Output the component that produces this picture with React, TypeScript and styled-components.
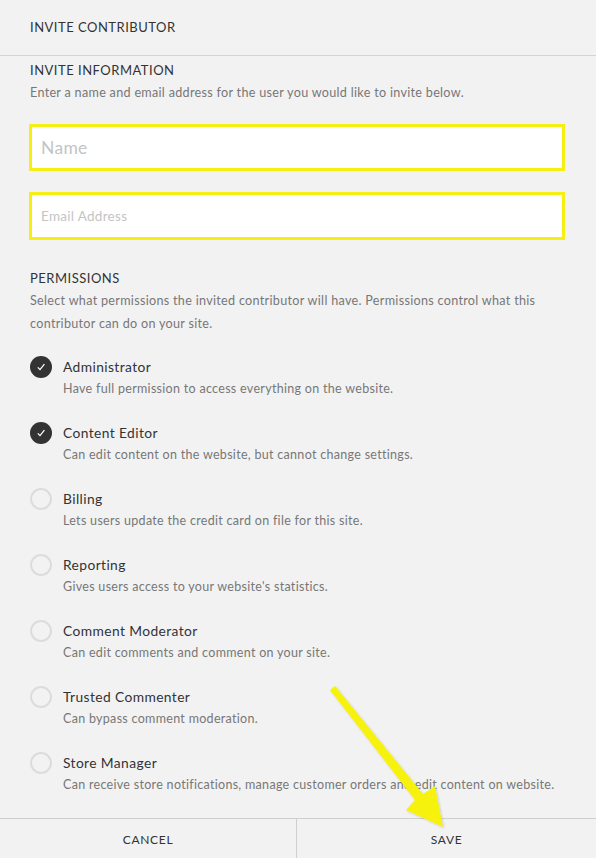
import { FunctionComponent } from 'react'
import styled, { createGlobalStyle } from 'styled-components'

const GlobalStyle = createGlobalStyle`
  html, body {
    margin: 0;
    padding: 0;
    background: #f2f2f2;
  }
  body {
    font-family: Lato, 'Open Sans', sans-serif;
    color: #333;
  }
  * {
    box-sizing: border-box;
  }
`

interface IPermission {
  title: string
  text: string
  checked?: boolean
}

const permissions: IPermission[] = [
  { title: 'Administrator', text: 'Have full permission to access everything on the website.', checked: true },
  { title: 'Content Editor', text: 'Can edit content on the website, but cannot change settings.', checked: true },
  { title: 'Billing', text: 'Lets users update the credit card on file for this site.' },
  { title: 'Reporting', text: "Gives users access to your website's statistics." },
  { title: 'Comment Moderator', text: 'Can edit comments and comment on your site.' },
  { title: 'Trusted Commenter', text: 'Can bypass comment moderation.' },
  { title: 'Store Manager', text: 'Can receive store notifications, manage customer orders and edit content on website.' }
]

const App: FunctionComponent = () => {
  return (
    <Page>
      <GlobalStyle />
      <Header>Invite Contributor</Header>
      <Body>
        <SectionTitle>Invite Information</SectionTitle>
        <Help>Enter a name and email address for the user you would like to invite below.</Help>
        <Field $large placeholder='Name' />
        <Field placeholder='Email Address' />

        <SectionTitle $gap={30}>Permissions</SectionTitle>
        <Help>
          Select what permissions the invited contributor will have. Permissions control what this
          contributor can do on your site.
        </Help>
        <List>
          {permissions.map(item => (
            <Permission key={item.title}>
              <Radio $checked={item.checked}>
                {item.checked && (
                  <svg width='10' height='10' viewBox='0 0 10 10'>
                    <path d='M1.8 5.4 L4 7.6 L8.4 2.2' fill='none' stroke='#fff' strokeWidth='1.3' />
                  </svg>
                )}
              </Radio>
              <div>
                <PermissionTitle>{item.title}</PermissionTitle>
                <PermissionText>{item.text}</PermissionText>
              </div>
            </Permission>
          ))}
        </List>
      </Body>
      <Footer>
        <FooterButton>Cancel</FooterButton>
        <FooterButton>Save</FooterButton>
      </Footer>
      <Arrow width='596' height='858' viewBox='0 0 596 858'>
        <defs>
          <filter id='arrowShadow' x='-20%' y='-20%' width='140%' height='140%'>
            <feDropShadow dx='1' dy='1' stdDeviation='1.2' floodColor='#000' floodOpacity='0.18' />
          </filter>
        </defs>
        <path
          d='M330 690 L335 686 L423 794 L435 786 L443 827 L406 810 L415 800 Z'
          fill='#f7f20f'
          filter='url(#arrowShadow)'
        />
      </Arrow>
    </Page>
  )
}

const Page = styled.div`
  position: relative;
  width: 596px;
  height: 858px;
  display: flex;
  flex-direction: column;
  overflow: hidden;
`

const Header = styled.div`
  height: 56px;
  flex: 0 0 56px;
  display: flex;
  align-items: center;
  padding: 0 30px 2px;
  border-bottom: 1px solid #d4d4d4;
  font-size: 13px;
  letter-spacing: 0.5px;
  text-transform: uppercase;
  color: #333;
`

const Body = styled.div`
  flex: 1;
  padding: 0 30px;
`

const SectionTitle = styled.div<{ $gap?: number }>`
  margin-top: ${p => p.$gap ?? 6}px;
  font-size: 13px;
  line-height: 16px;
  letter-spacing: 0.5px;
  text-transform: uppercase;
  color: #333;
`

const Help = styled.p`
  margin: 3px 0 0;
  font-size: 12.6px;
  line-height: 23px;
  letter-spacing: 0.3px;
  color: #777;
`

const Field = styled.input<{ $large?: boolean }>`
  display: block;
  width: 536px;
  margin: ${p => (p.$large ? '20px' : '21px')} 0 0 -1px;
  height: ${p => (p.$large ? '47px' : '48px')};
  padding: 0 9px;
  border: 3px solid #f5ef13;
  background: #fff;
  font-family: Lato, 'Open Sans', sans-serif;
  font-size: ${p => (p.$large ? '17.5px' : '13.5px')};
  letter-spacing: 0.3px;
  outline: none;

  &::placeholder {
    color: #c4c4c4;
  }
`

const List = styled.div`
  margin-top: 22px;
  display: flex;
  flex-direction: column;
  gap: 24px;
`

const Permission = styled.div`
  display: flex;
  gap: 11px;
`

const Radio = styled.div<{ $checked?: boolean }>`
  width: 22px;
  height: 22px;
  flex: 0 0 22px;
  margin-top: -1px;
  border-radius: 50%;
  display: flex;
  align-items: center;
  justify-content: center;
  background: ${p => (p.$checked ? '#333' : 'transparent')};
  border: ${p => (p.$checked ? 'none' : '2px solid #dcdcdc')};
`

const PermissionTitle = styled.div`
  font-size: 13.8px;
  line-height: 20px;
  letter-spacing: 0.4px;
  color: #333;
`

const PermissionText = styled.div`
  margin-top: 2px;
  font-size: 12.5px;
  line-height: 20px;
  letter-spacing: 0.3px;
  color: #777;
`

const Footer = styled.div`
  flex: 0 0 40px;
  display: grid;
  grid-template-columns: 296px 1fr;
  border-top: 1px solid #cfcfcf;
`

const FooterButton = styled.button`
  border: none;
  background: transparent;
  padding: 2px 0 0;
  font-family: Lato, 'Open Sans', sans-serif;
  font-size: 12px;
  letter-spacing: 0.7px;
  text-transform: uppercase;
  color: #333;

  & + & {
    border-left: 1px solid #cfcfcf;
  }
`

const Arrow = styled.svg`
  position: absolute;
  top: 0;
  left: 0;
  pointer-events: none;
`

export default App
